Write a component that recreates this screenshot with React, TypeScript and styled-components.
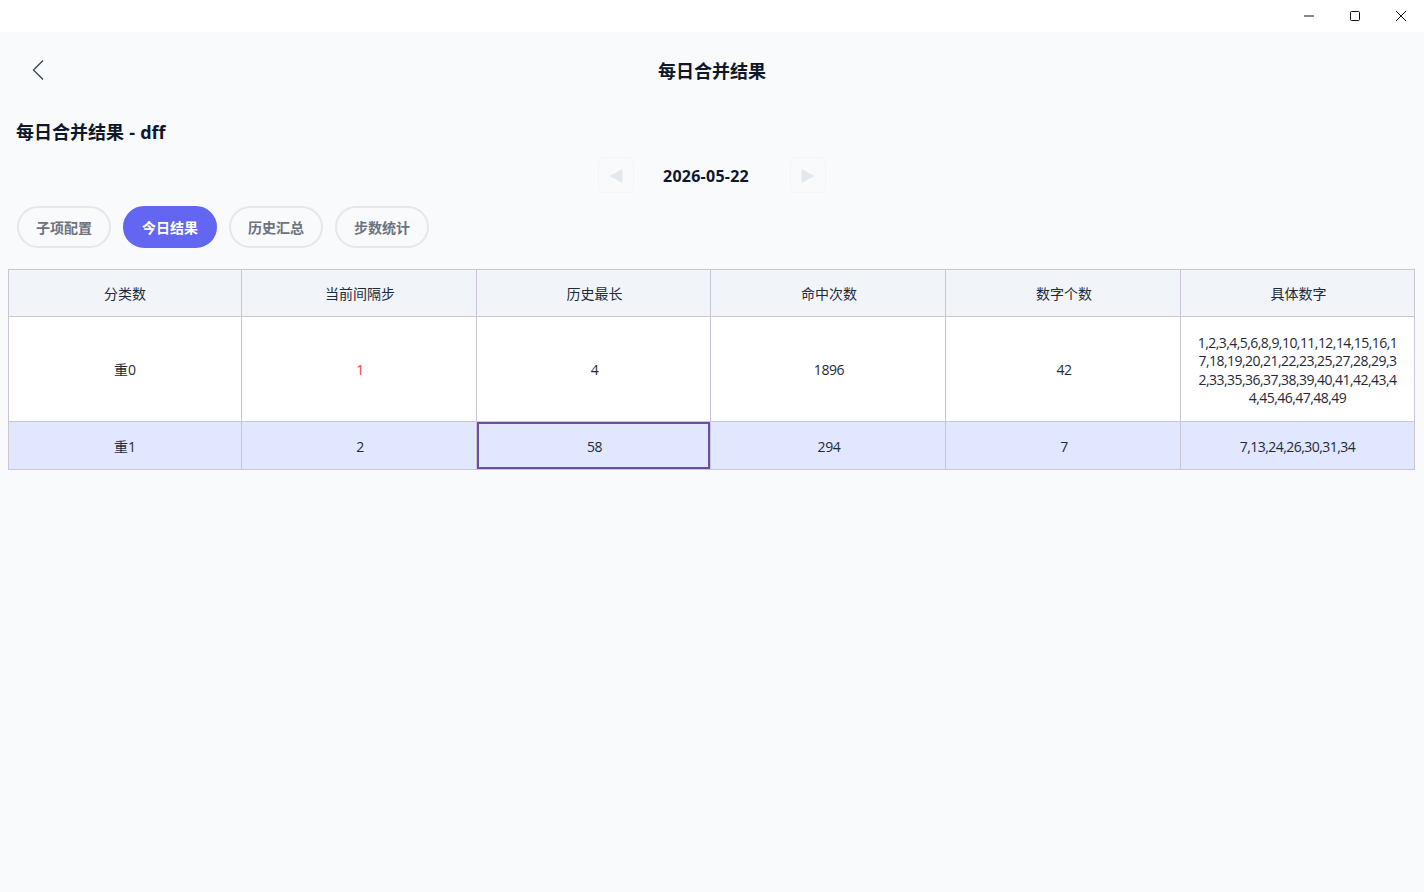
import React from "react";
import styled, { createGlobalStyle } from "styled-components";

const GlobalStyle = createGlobalStyle`
    html, body {
        margin: 0;
        padding: 0;
        height: 100%;
        background: #f8fafc;
    }
    body {
        font-family: "Open Sans", "Noto Sans CJK SC", sans-serif;
        color: #0f172a;
    }
`;

const Page = styled.div`
    width: 1424px;
    height: 892px;
    overflow: hidden;
    display: flex;
    flex-direction: column;
    background: #f8fafc;
`;

const TitleBar = styled.div`
    height: 32px;
    flex: none;
    background: #ffffff;
    display: flex;
    justify-content: flex-end;
`;

const WindowButton = styled.div`
    width: 46px;
    height: 32px;
    display: flex;
    align-items: center;
    justify-content: center;
    color: #111111;
`;

const Header = styled.div`
    height: 78px;
    flex: none;
    display: flex;
    align-items: center;
    justify-content: center;
    position: relative;
`;

const BackButton = styled.div`
    position: absolute;
    left: 30px;
    top: 26px;
    width: 16px;
    height: 24px;
    color: #374151;
`;

const HeaderTitle = styled.h1`
    margin: 0;
    font-size: 18px;
    line-height: 24px;
    font-weight: 700;
    color: #0f172a;
`;

const Content = styled.div`
    padding: 0 8px;
    display: flex;
    flex-direction: column;
`;

const SectionTitle = styled.h2`
    margin: 9px 0 0 8px;
    font-size: 18px;
    line-height: 26px;
    font-weight: 700;
    word-spacing: 0.5px;
    color: #0f172a;
`;

const DateRow = styled.div`
    margin-top: 12px;
    margin-left: 590px;
    width: 228px;
    height: 36px;
    display: flex;
    align-items: center;
    justify-content: space-between;
`;

const DateArrow = styled.div`
    width: 36px;
    height: 36px;
    box-sizing: border-box;
    padding-top: 2px;
    border: 1px solid #f1f5f9;
    border-radius: 5px;
    display: flex;
    align-items: center;
    justify-content: center;
    color: #e2e8f0;
`;

const DateText = styled.span`
    margin-right: 12px;
    margin-top: 2px;
    font-size: 16px;
    font-weight: 700;
    letter-spacing: 0.25px;
    color: #0f172a;
`;

const Tabs = styled.div`
    margin-top: 13px;
    margin-left: 9px;
    display: flex;
    gap: 12px;
`;

const Tab = styled.div<{ $active?: boolean }>`
    width: 94px;
    height: 42px;
    box-sizing: border-box;
    border-radius: 21px;
    border: 2px solid ${(p) => (p.$active ? "#6366f1" : "#e5e7eb")};
    background: ${(p) => (p.$active ? "#6366f1" : "transparent")};
    color: ${(p) => (p.$active ? "#ffffff" : "#6b7280")};
    font-size: 14px;
    font-weight: 700;
    display: flex;
    align-items: center;
    justify-content: center;
`;

const Table = styled.table`
    margin-top: 21px;
    width: 1407px;
    table-layout: fixed;
    border-collapse: collapse;
    font-size: 14px;
    text-align: center;
    color: #1e293b;
`;

const Col = styled.col<{ $width: number }>`
    width: ${(p) => p.$width}px;
`;

const HeadCell = styled.th`
    height: 46px;
    padding: 0;
    font-weight: 400;
    background: #f1f5f9;
    border: 1px solid #cbc5d6;

    & + & {
        padding-left: 2px;
    }
`;

const Row = styled.tr<{ $highlight?: boolean }>`
    background: ${(p) => (p.$highlight ? "#e0e7ff" : "#ffffff")};
`;

const Cell = styled.td<{ $danger?: boolean; $selected?: boolean; $height: number; $top: number }>`
    height: ${(p) => p.$height}px;
    padding: ${(p) => p.$top}px 16px 0 18px;
    line-height: 18.4px;
    letter-spacing: -0.4px;
    word-break: break-all;
    border: 1px solid #cbc5d6;
    color: ${(p) => (p.$danger ? "#ff3b3b" : "#1e293b")};
    box-shadow: ${(p) => (p.$selected ? "inset 0 0 0 2px #6750a4" : "none")};
`;

const NameCell = styled(Cell)`
    padding-left: 16px;
    letter-spacing: normal;
`;

const NumbersCell = styled(Cell)`
    padding-left: 15px;
    padding-right: 15px;
    letter-spacing: -0.55px;
`;

const columns = ["分类数", "当前间隔步", "历史最长", "命中次数", "数字个数", "具体数字"];
const columnWidths = [233, 235, 234, 235, 235, 234];
const tabs = ["子项配置", "今日结果", "历史汇总", "步数统计"];

const rows = [
    {
        name: "重0",
        height: 101,
        top: 3,
        gap: "1",
        longest: "4",
        hits: "1896",
        count: "42",
        numbers: "1,2,3,4,5,6,8,9,10,11,12,14,15,16,17,18,19,20,21,22,23,25,27,28,29,32,33,35,36,37,38,39,40,41,42,43,44,45,46,47,48,49",
    },
    { name: "重1", height: 43, top: 4, gap: "2", longest: "58", hits: "294", count: "7", numbers: "7,13,24,26,30,31,34" },
];

export default function App() {
    return (
        <Page>
            <GlobalStyle />
            <TitleBar>
                <WindowButton>
                    <svg width="12" height="12" viewBox="0 0 12 12">
                        <path d="M1 6h10" stroke="currentColor" fill="none" />
                    </svg>
                </WindowButton>
                <WindowButton>
                    <svg width="12" height="12" viewBox="0 0 12 12">
                        <rect x="1.5" y="1.5" width="9" height="9" rx="1" stroke="currentColor" fill="none" />
                    </svg>
                </WindowButton>
                <WindowButton>
                    <svg width="12" height="12" viewBox="0 0 12 12">
                        <path d="M1 1l10 10M11 1L1 11" stroke="currentColor" fill="none" />
                    </svg>
                </WindowButton>
            </TitleBar>
            <Header>
                <BackButton>
                    <svg width="16" height="24" viewBox="0 0 16 24">
                        <path d="M13 2.5L3.5 12l9.5 9.5" stroke="currentColor" strokeWidth="1.3" fill="none" />
                    </svg>
                </BackButton>
                <HeaderTitle>每日合并结果</HeaderTitle>
            </Header>
            <Content>
                <SectionTitle>每日合并结果 - dff</SectionTitle>
                <DateRow>
                    <DateArrow>
                        <svg width="14" height="14" viewBox="0 0 14 14">
                            <path d="M13.5 0v14L0.5 7z" fill="currentColor" />
                        </svg>
                    </DateArrow>
                    <DateText>2026-05-22</DateText>
                    <DateArrow>
                        <svg width="14" height="14" viewBox="0 0 14 14">
                            <path d="M0.5 0v14l13-7z" fill="currentColor" />
                        </svg>
                    </DateArrow>
                </DateRow>
                <Tabs>
                    {tabs.map((t, i) => (
                        <Tab key={t} $active={i === 1}>{t}</Tab>
                    ))}
                </Tabs>
                <Table>
                    <colgroup>
                        {columnWidths.map((w, i) => (
                            <Col key={i} $width={w} />
                        ))}
                    </colgroup>
                    <thead>
                        <tr>
                            {columns.map((c) => (
                                <HeadCell key={c}>{c}</HeadCell>
                            ))}
                        </tr>
                    </thead>
                    <tbody>
                        {rows.map((r, i) => (
                            <Row key={r.name} $highlight={i === 1}>
                                <NameCell $height={r.height} $top={r.top}>{r.name}</NameCell>
                                <Cell $height={r.height} $top={r.top} $danger={i === 0}>{r.gap}</Cell>
                                <Cell $height={r.height} $top={r.top} $selected={i === 1}>{r.longest}</Cell>
                                <Cell $height={r.height} $top={r.top}>{r.hits}</Cell>
                                <Cell $height={r.height} $top={r.top}>{r.count}</Cell>
                                <NumbersCell $height={r.height} $top={r.top}>{r.numbers}</NumbersCell>
                            </Row>
                        ))}
                    </tbody>
                </Table>
            </Content>
        </Page>
    );
}
